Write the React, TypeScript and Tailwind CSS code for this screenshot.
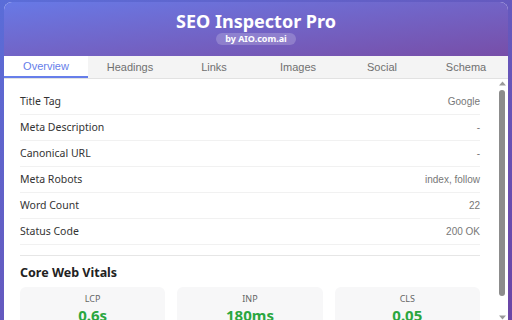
import React from "react";

const rows: [string, string][] = [
  ["Title Tag", "Google"],
  ["Meta Description", "-"],
  ["Canonical URL", "-"],
  ["Meta Robots", "index, follow"],
  ["Word Count", "22"],
  ["Status Code", "200 OK"],
];

const tabs = ["Overview", "Headings", "Links", "Images", "Social", "Schema"];

const vitals: [string, string][] = [
  ["LCP", "0.6s"],
  ["INP", "180ms"],
  ["CLS", "0.05"],
];

export default function App() {
  return (
    <div className="w-[512px] h-[320px] overflow-hidden bg-gradient-to-br from-[#5a6dd8] to-[#6a45a6] px-[4px] pt-[2px] flex flex-col">
      <div className="flex-1 min-h-0 flex flex-col bg-white rounded-t-[8px] overflow-hidden">
        {/* Header */}
        <div className="h-[54px] bg-gradient-to-br from-[#6779e6] to-[#774ea8] flex flex-col items-center pt-[10px]">
          <div className="text-white font-bold text-[18px] leading-[18px] font-['Noto_Sans',sans-serif]">
            SEO Inspector Pro
          </div>
          <div className="mt-[3px] h-[12px] px-[9px] rounded-full bg-white/20 flex items-center text-white font-bold text-[9px] leading-[12px] font-['Noto_Sans',sans-serif]">
            by AIO.com.ai
          </div>
        </div>
        {/* Tabs */}
        <div className="h-[23px] flex bg-[#f4f4f4] border-b border-[#e2e2e2]">
          {tabs.map((t, i) => (
            <div
              key={t}
              className={
                i === 0
                  ? "flex-1 flex items-center justify-center bg-white border-b-2 border-[#667eea] text-[#667eea] text-[11px] font-['Liberation_Sans',sans-serif]"
                  : "flex-1 flex items-center justify-center text-[#707070] text-[11px] font-['Liberation_Sans',sans-serif]"
              }
            >
              {t}
            </div>
          ))}
        </div>
        {/* Body */}
        <div className="flex-1 min-h-0 flex">
          <div className="flex-1 min-w-0 px-[16px] pt-[10px]">
            <div className="pb-[10px] border-b border-[#e6e6e6]">
              {rows.map(([k, v]) => (
                <div
                  key={k}
                  className="h-[26px] flex items-center justify-between border-b border-[#f1f1f1]"
                >
                  <span className="text-[10.5px] text-[#333] font-['Noto_Sans',sans-serif]">{k}</span>
                  <span className="text-[10px] text-[#777] font-['Liberation_Sans',sans-serif]">{v}</span>
                </div>
              ))}
            </div>
            <div className="mt-[9px] text-[12.5px] leading-[16px] font-bold text-[#222] font-['Noto_Sans',sans-serif]">
              Core Web Vitals
            </div>
            <div className="mt-[6px] grid grid-cols-3 gap-[12px]">
              {vitals.map(([k, v]) => (
                <div key={k} className="h-[60px] rounded-[6px] bg-[#f7f7f8] flex flex-col items-center pt-[6px]">
                  <div className="text-[9px] leading-[12px] text-[#666] font-['Noto_Sans',sans-serif]">{k}</div>
                  <div className="text-[15px] leading-[20px] font-bold text-[#2aa63f] font-['Noto_Sans',sans-serif]">{v}</div>
                </div>
              ))}
            </div>
          </div>
          {/* Scrollbar */}
          <div className="w-[12px] flex flex-col items-center bg-white">
            <svg width="7" height="5" viewBox="0 0 7 5" className="mt-[2px]">
              <polygon points="3.5,0.5 7,4.5 0,4.5" fill="#9a9a9a" />
            </svg>
            <div className="mt-[4px] w-[6px] h-[208px] rounded-full bg-[#8c8c8c]" />
            <svg width="7" height="5" viewBox="0 0 7 5" className="mt-[19px]">
              <polygon points="0,0.5 7,0.5 3.5,4.5" fill="#9a9a9a" />
            </svg>
          </div>
        </div>
      </div>
    </div>
  );
}
